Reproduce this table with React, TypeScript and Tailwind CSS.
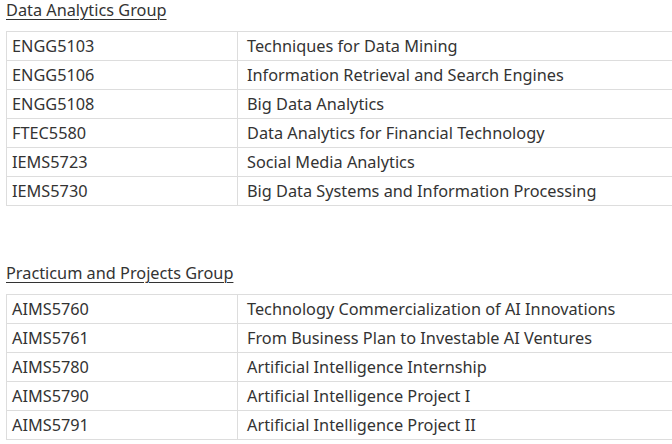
import React from "react";

const groups = [
  {
    title: "Data Analytics Group",
    rows: [
      ["ENGG5103", "Techniques for Data Mining"],
      ["ENGG5106", "Information Retrieval and Search Engines"],
      ["ENGG5108", "Big Data Analytics"],
      ["FTEC5580", "Data Analytics for Financial Technology"],
      ["IEMS5723", "Social Media Analytics"],
      ["IEMS5730", "Big Data Systems and Information Processing"],
    ],
  },
  {
    title: "Practicum and Projects Group",
    rows: [
      ["AIMS5760", "Technology Commercialization of AI Innovations"],
      ["AIMS5761", "From Business Plan to Investable AI Ventures"],
      ["AIMS5780", "Artificial Intelligence Internship"],
      ["AIMS5790", "Artificial Intelligence Project I"],
      ["AIMS5791", "Artificial Intelligence Project II"],
    ],
  },
];

function Group({ title, rows, top }: { title: string; rows: string[][]; top: string }) {
  return (
    <div className={`flex flex-col ${top}`}>
      <div className="pl-[6px] h-[22px] leading-[20px] underline underline-offset-[3px] decoration-1">{title}</div>
      <table className="mt-[9px] ml-[6px] w-[720px] border-collapse">
        <tbody>
          {rows.map(([code, name]) => (
            <tr key={code} className="h-[29px]">
              <td className="w-[231px] h-[29px] border border-[#dddddd] pl-[5px] p-0 align-middle leading-[20px]">{code}</td>
              <td className="h-[29px] border border-[#dddddd] pl-[9px] p-0 align-middle leading-[20px]">{name}</td>
            </tr>
          ))}
        </tbody>
      </table>
    </div>
  );
}

export default function App() {
  return (
    <div
      className="w-[672px] h-[444px] overflow-hidden bg-white text-[#333333] text-[16.3px]"
      style={{ fontFamily: '"Noto Sans", "Open Sans", sans-serif' }}
    >
      <Group title={groups[0].title} rows={groups[0].rows} top="" />
      <Group title={groups[1].title} rows={groups[1].rows} top="mt-[57px]" />
    </div>
  );
}
